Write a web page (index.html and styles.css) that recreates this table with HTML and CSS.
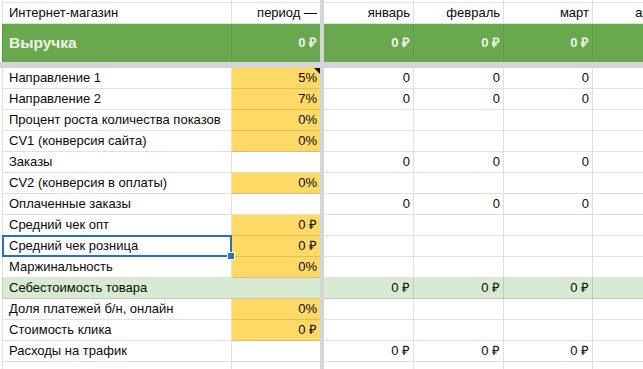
FILE: index.html
```html
<!DOCTYPE html>
<html lang="ru">
<head>
<meta charset="utf-8">
<title>Интернет-магазин</title>
<link rel="stylesheet" href="styles.css">
</head>
<body>
<div class="sheet">
  <div class="row stub"><div class="c"></div><div class="c"></div><div class="bar"></div><div class="c"></div><div class="c"></div><div class="c"></div><div class="c"></div></div>
  <div class="row head">
    <div class="c">Интернет-магазин</div><div class="c num">период —</div><div class="bar"></div>
    <div class="c num">январь</div><div class="c num">февраль</div><div class="c num">март</div><div class="c num">апрель</div>
  </div>
  <div class="row total">
    <div class="c title">Выручка</div><div class="c num">0 ₽</div><div class="bar"></div>
    <div class="c num">0 ₽</div><div class="c num">0 ₽</div><div class="c num">0 ₽</div><div class="c num">0 ₽</div>
  </div>
  <div class="hbar"></div>

  <div class="row">
    <div class="c">Направление 1</div><div class="c num in note">5%</div><div class="bar"></div>
    <div class="c num">0</div><div class="c num">0</div><div class="c num">0</div><div class="c num"></div>
  </div>
  <div class="row">
    <div class="c">Направление 2</div><div class="c num in">7%</div><div class="bar"></div>
    <div class="c num">0</div><div class="c num">0</div><div class="c num">0</div><div class="c num"></div>
  </div>
  <div class="row">
    <div class="c">Процент роста количества показов</div><div class="c num in">0%</div><div class="bar"></div>
    <div class="c"></div><div class="c"></div><div class="c"></div><div class="c"></div>
  </div>
  <div class="row">
    <div class="c">CV1 (конверсия сайта)</div><div class="c num in">0%</div><div class="bar"></div>
    <div class="c"></div><div class="c"></div><div class="c"></div><div class="c"></div>
  </div>
  <div class="row">
    <div class="c">Заказы</div><div class="c num"></div><div class="bar"></div>
    <div class="c num">0</div><div class="c num">0</div><div class="c num">0</div><div class="c num"></div>
  </div>
  <div class="row">
    <div class="c">CV2 (конверсия в оплаты)</div><div class="c num in">0%</div><div class="bar"></div>
    <div class="c"></div><div class="c"></div><div class="c"></div><div class="c"></div>
  </div>
  <div class="row">
    <div class="c">Оплаченные заказы</div><div class="c num"></div><div class="bar"></div>
    <div class="c num">0</div><div class="c num">0</div><div class="c num">0</div><div class="c num"></div>
  </div>
  <div class="row">
    <div class="c">Средний чек опт</div><div class="c num in">0 ₽</div><div class="bar"></div>
    <div class="c"></div><div class="c"></div><div class="c"></div><div class="c"></div>
  </div>
  <div class="row">
    <div class="c selected">Средний чек розница</div><div class="c num in">0 ₽</div><div class="bar"></div>
    <div class="c"></div><div class="c"></div><div class="c"></div><div class="c"></div>
  </div>
  <div class="row">
    <div class="c">Маржинальность</div><div class="c num in">0%</div><div class="bar"></div>
    <div class="c"></div><div class="c"></div><div class="c"></div><div class="c"></div>
  </div>
  <div class="row sub">
    <div class="c">Себестоимость товара</div><div class="c num"></div><div class="bar"></div>
    <div class="c num">0 ₽</div><div class="c num">0 ₽</div><div class="c num">0 ₽</div><div class="c num"></div>
  </div>
  <div class="row">
    <div class="c">Доля платежей б/н, онлайн</div><div class="c num in">0%</div><div class="bar"></div>
    <div class="c"></div><div class="c"></div><div class="c"></div><div class="c"></div>
  </div>
  <div class="row">
    <div class="c">Стоимость клика</div><div class="c num in">0 ₽</div><div class="bar"></div>
    <div class="c"></div><div class="c"></div><div class="c"></div><div class="c"></div>
  </div>
  <div class="row">
    <div class="c">Расходы на трафик</div><div class="c num"></div><div class="bar"></div>
    <div class="c num">0 ₽</div><div class="c num">0 ₽</div><div class="c num">0 ₽</div><div class="c num"></div>
  </div>
  <div class="row">
    <div class="c"></div><div class="c"></div><div class="bar"></div>
    <div class="c"></div><div class="c"></div><div class="c"></div><div class="c"></div>
  </div>
</div>
</body>
</html>
```
FILE: styles.css
```css
* { box-sizing: border-box; }
html, body {
  margin: 0;
  padding: 0;
  background: #fff;
  overflow: hidden;
  width: 643px;
  height: 369px;
}
.sheet {
  width: 700px;
  padding-left: 2px;
  font-family: "Liberation Sans", Arial, sans-serif;
  font-size: 13px;
  color: #0a0a0a;
}
.row {
  display: grid;
  grid-template-columns: 230px 88px 4px 90px 90px 89px 89px;
  height: 21px;
}
.c {
  border-right: 1px solid rgba(0, 0, 0, 0.12);
  border-bottom: 1px solid rgba(0, 0, 0, 0.12);
  padding: 0 4px 0 6px;
  white-space: nowrap;
  overflow: hidden;
  display: flex;
  align-items: center;
  line-height: 20px;
}
.row > .c:first-child { border-left: 1px solid rgba(0, 0, 0, 0.12); }
.row > .c:nth-child(2) { border-right: 0; }
.num { justify-content: flex-end; padding: 0 3px 0 4px; }
.bar { background: #d3d6d9; }
.stub { height: 3px; }
.stub .c { padding: 0; }
.head { height: 21px; }
.total { height: 38px; background: #6aa84f; }
.total .c {
  border-color: rgba(0, 0, 0, 0.06);
  border-bottom: 0;
  color: #ecf6e4;
  font-weight: bold;
}
.total .title { font-size: 15.5px; padding-left: 6px; }
.hbar { height: 6px; background: #d3d6d9; width: 700px; margin-left: -2px; }
.in { background: #ffd966; }
.sub { background: #d9ead3; }
.sub > .c:first-child { border-right: 0; }
.note { position: relative; }
.note::after {
  content: "";
  position: absolute;
  top: 0;
  right: 0;
  border-style: solid;
  border-width: 0 6px 6px 0;
  border-color: transparent #111 transparent transparent;
}
.selected { position: relative; overflow: visible; }
.selected::before {
  content: "";
  position: absolute;
  top: -1px;
  left: -1px;
  right: -1px;
  bottom: -1px;
  border: 2px solid #2c6ec4;
  pointer-events: none;
}
.selected::after {
  content: "";
  position: absolute;
  right: -4px;
  bottom: -4px;
  width: 6px;
  height: 6px;
  background: #2c6ec4;
  border: 1px solid #fff;
  z-index: 2;
}
```
